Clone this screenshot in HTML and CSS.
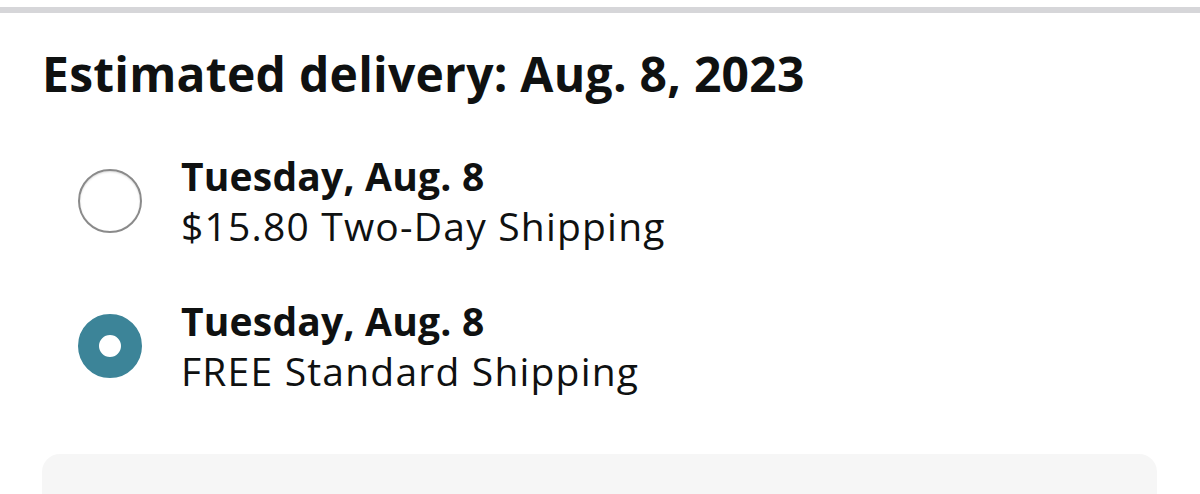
FILE: index.html
```html
<!DOCTYPE html>
<html lang="en">
<head>
<meta charset="utf-8">
<title>Estimated delivery</title>
<link rel="stylesheet" href="styles.css">
</head>
<body>
<div class="topbar"></div>
<main class="content">
  <h1 class="heading">Estimated delivery: Aug. 8, 2023</h1>
  <div class="options">
    <label class="option">
      <span class="radio"></span>
      <span class="option-text">
        <span class="option-date">Tuesday, Aug. 8</span>
        <span class="option-desc">$15.80 Two-Day Shipping</span>
      </span>
    </label>
    <label class="option">
      <span class="radio radio-checked"></span>
      <span class="option-text">
        <span class="option-date">Tuesday, Aug. 8</span>
        <span class="option-desc">FREE Standard Shipping</span>
      </span>
    </label>
  </div>
  <div class="panel"></div>
</main>
</body>
</html>
```

FILE: styles.css
```css
html, body {
  margin: 0;
  padding: 0;
  background: #ffffff;
  overflow: hidden;
}
body {
  font-family: "Open Sans", "Noto Sans", sans-serif;
  color: #0f1111;
  height: 494px;
}
.topbar {
  margin-top: 7px;
  height: 6px;
  background: #d6d6d9;
}
.content {
  padding-left: 42px;
  padding-top: 32px;
}
.heading {
  margin: 0;
  font-size: 48px;
  line-height: 58px;
  font-weight: 700;
  letter-spacing: 0.25px;
}
.options {
  margin-top: 48px;
  padding-left: 36px;
  display: flex;
  flex-direction: column;
  gap: 45px;
}
.option {
  display: flex;
  align-items: center;
  gap: 39px;
}
.radio {
  flex: none;
  width: 64px;
  height: 64px;
  box-sizing: border-box;
  border-radius: 50%;
  border: 2px solid #8a8a8a;
  box-shadow: inset 0 1px 2px rgba(0,0,0,0.15);
  background: #fff;
}
.radio-checked {
  border: 21px solid #3c8498;
  box-shadow: none;
}
.option-text {
  display: flex;
  flex-direction: column;
  font-size: 39px;
  line-height: 50px;
}
.option-date {
  font-weight: 700;
  letter-spacing: 0.2px;
}
.option-desc {
  font-weight: 400;
  letter-spacing: 1.2px;
}
.panel {
  margin-top: 58px;
  width: 1115px;
  height: 40px;
  background: #f6f6f6;
  border-radius: 18px 18px 0 0;
}
```
